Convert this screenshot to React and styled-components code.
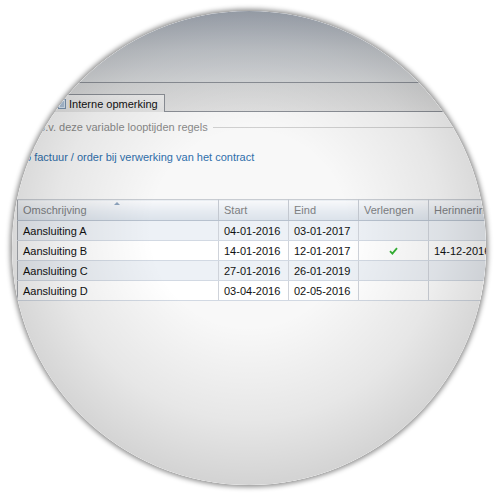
import React from "react";
import styled, { createGlobalStyle } from "styled-components";

const GlobalStyle = createGlobalStyle`
  html, body {
    margin: 0;
    background: #ffffff;
  }
  body {
    font-family: "Liberation Sans", Arial, sans-serif;
  }
`;

const Page = styled.div`
  box-sizing: border-box;
  width: 497px;
  height: 497px;
  padding: 11px 0 0 12px;
  background: #ffffff;
`;

const Lens = styled.div`
  position: relative;
  width: 474px;
  height: 474px;
  border-radius: 50%;
  overflow: hidden;
  box-shadow: 0 0 5px 2px rgba(0, 0, 0, 0.45);
`;

const Screen = styled.div`
  display: flex;
  flex-direction: column;
  width: 474px;
  height: 474px;
  background: #f8f8f8;
  font-size: 11px;
  color: #111;
`;

const TitleBand = styled.div`
  height: 71px;
  flex: none;
  background: linear-gradient(#a4abb6, #c3c7cc 55%, #d6d8da);
  border-bottom: 1px solid #8b8f96;
`;

const TabStrip = styled.div`
  display: flex;
  align-items: flex-end;
  height: 28px;
  flex: none;
  padding-left: 41px;
  background: linear-gradient(#d6d7d8, #e0e0e0);
  border-bottom: 1px solid #8b8f96;
`;

const Tab = styled.div`
  display: flex;
  align-items: center;
  gap: 3px;
  height: 17px;
  padding: 0 6px 0 4px;
  border: 1px solid #8b8f96;
  border-bottom: none;
  background: linear-gradient(#eeeeee, #e4e4e4);
  color: #111;
  font-size: 11px;
  margin-bottom: -1px;
`;

const Body = styled.div`
  display: flex;
  flex-direction: column;
  flex: 1;
`;

const LegendRow = styled.div`
  display: flex;
  align-items: center;
  height: 14px;
  margin-top: 8px;
  padding-left: 21px;
  color: #8a8a8a;
  white-space: nowrap;
`;

const LegendLine = styled.div`
  flex: 1;
  height: 1px;
  margin-left: 5px;
  background: #d0d0d0;
`;

const Link = styled.div`
  height: 14px;
  line-height: 14px;
  margin-top: 16px;
  padding-left: 2px;
  color: #2f6fab;
  white-space: nowrap;
`;

const Table = styled.table`
  margin: 35px 0 0 5px;
  border-collapse: collapse;
  table-layout: fixed;
  width: 550px;
  border-left: 1px solid #a8acb2;
  border-bottom: 1px solid #9a9ea4;
`;

const Th = styled.th`
  position: relative;
  width: ${(p) => p.$w}px;
  height: 21px;
  padding: 0 5px;
  box-sizing: border-box;
  text-align: left;
  font-weight: normal;
  color: #7d7f82;
  background: linear-gradient(#f8f9fb, #e6ebf1 55%, #dbe2ea);
  border-right: 1px solid #c3c8d0;
  border-top: 1px solid #c8ccd2;
  border-bottom: 1px solid #b7c1ce;
`;

const SortArrow = styled.span`
  position: absolute;
  top: 2px;
  left: 96px;
  width: 0;
  height: 0;
  border-left: 3px solid transparent;
  border-right: 3px solid transparent;
  border-bottom: 3px solid #8ea4be;
`;

const Tr = styled.tr`
  background: ${(p) => (p.$alt ? "#edf1f6" : "#ffffff")};
`;

const Td = styled.td`
  height: 20px;
  padding: 0 5px;
  box-sizing: border-box;
  text-align: ${(p) => (p.$center ? "center" : "left")};
  white-space: nowrap;
  overflow: hidden;
  color: #111;
  border-right: 1px solid #cfd3da;
  border-bottom: 1px solid #d2d9e3;
`;

const Vignette = styled.div`
  position: absolute;
  inset: 0;
  pointer-events: none;
  border-radius: 50%;
  background: radial-gradient(
    circle at 50% 46%,
    rgba(0, 0, 0, 0) 0%,
    rgba(0, 0, 0, 0) 28%,
    rgba(0, 0, 0, 0.07) 55%,
    rgba(0, 0, 0, 0.2) 85%,
    rgba(0, 0, 0, 0.26) 100%
  );
`;

const DocIcon = () => (
  <svg width="8" height="10" viewBox="0 0 8 10">
    <rect x="0.5" y="0.5" width="7" height="9" fill="#d9e6f3" stroke="#7b94b0" />
    <path d="M2 3h4M2 5h4M2 7h4" stroke="#6f8db0" strokeWidth="0.8" />
  </svg>
);

const Check = () => (
  <svg width="9" height="8" viewBox="0 0 9 8">
    <path d="M1 4.2 L3.4 6.6 L8 1.2" fill="none" stroke="#35b235" strokeWidth="1.8" />
  </svg>
);

const columns = [
  { label: "Omschrijving", w: 201, sort: true },
  { label: "Start", w: 70 },
  { label: "Eind", w: 70 },
  { label: "Verlengen", w: 70 },
  { label: "Herinnering", w: 139 },
];

const rows = [
  { name: "Aansluiting A", start: "04-01-2016", end: "03-01-2017", renew: false, remind: "" },
  { name: "Aansluiting B", start: "14-01-2016", end: "12-01-2017", renew: true, remind: "14-12-2016" },
  { name: "Aansluiting C", start: "27-01-2016", end: "26-01-2019", renew: false, remind: "" },
  { name: "Aansluiting D", start: "03-04-2016", end: "02-05-2016", renew: false, remind: "" },
];

export default function App() {
  return (
    <Page>
      <GlobalStyle />
      <Lens>
        <Screen>
          <TitleBand />
          <TabStrip>
            <Tab>
              <DocIcon />
              Interne opmerking
            </Tab>
          </TabStrip>
          <Body>
            <LegendRow>
              t.b.v. deze variable looptijden regels
              <LegendLine />
            </LegendRow>
            <Link>Pro factuur / order bij verwerking van het contract</Link>
            <Table>
              <thead>
                <tr>
                  {columns.map((c) => (
                    <Th key={c.label} $w={c.w}>
                      {c.sort && <SortArrow />}
                      {c.label}
                    </Th>
                  ))}
                </tr>
              </thead>
              <tbody>
                {rows.map((r, i) => (
                  <Tr key={r.name} $alt={i % 2 === 0}>
                    <Td>{r.name}</Td>
                    <Td>{r.start}</Td>
                    <Td>{r.end}</Td>
                    <Td $center>{r.renew && <Check />}</Td>
                    <Td>{r.remind}</Td>
                  </Tr>
                ))}
              </tbody>
            </Table>
          </Body>
        </Screen>
        <Vignette />
      </Lens>
    </Page>
  );
}
